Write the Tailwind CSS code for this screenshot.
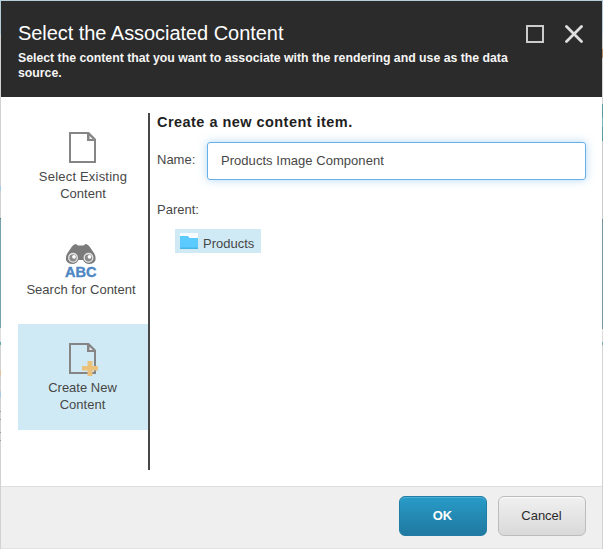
<!DOCTYPE html>
<html lang="en">
<head>
<meta charset="utf-8">
<title>Select the Associated Content</title>
<script src="https://cdn.jsdelivr.net/npm/@tailwindcss/browser@4"></script>
</head>
<body class="w-[603px] h-[549px] overflow-hidden bg-[#d2d2d2] font-['Liberation_Sans',Arial,sans-serif] text-[13px] text-[#474747]">
<div class="grid h-[549px] w-[603px] grid-cols-[1px_601px_1px]">
  <!-- page behind the dialog, left edge -->
  <div class="flex flex-col">
    <div class="h-[34px] bg-[#b5ccd9]"></div>
    <div class="h-[152px] bg-[#d2d2d2]"></div>
    <div class="h-[5px] bg-[#a4c9e2]"></div>
    <div class="h-[27px] bg-[#d2d2d2]"></div>
    <div class="h-px bg-[#55707c]"></div>
    <div class="h-[109px] bg-[#76a3ab]"></div>
    <div class="h-[14px] bg-[#dedede]"></div>
    <div class="h-[3px] bg-[#62acad]"></div>
    <div class="h-[25px] bg-[#d2d2d2]"></div>
    <div class="h-[6px] bg-[#dfc2a0]"></div>
    <div class="h-[15px] bg-[#d2d2d2]"></div>
    <div class="h-[7px] bg-[#afc9df]"></div>
    <div class="h-[13px] bg-[#d2d2d2]"></div>
    <div class="h-px bg-[#999]"></div>
    <div class="h-[7px] bg-[#d2d2d2]"></div>
    <div class="h-px bg-[#999]"></div>
    <div class="h-[12px] bg-[#d2d2d2]"></div>
    <div class="h-px bg-[#999]"></div>
    <div class="h-[7px] bg-[#d2d2d2]"></div>
    <div class="h-px bg-[#999]"></div>
  </div>
  <!-- dialog -->
  <div class="flex flex-col border-t border-t-[#b8ced9] border-b border-b-[#e4e4e4] bg-white">
    <header class="flex h-24 justify-between bg-[#2b2b2b] pl-[17px] pr-[19px] text-white">
      <div class="pt-[19px]">
        <h1 class="whitespace-nowrap text-[20px] leading-[26px] tracking-[-0.05px]">Select the Associated Content</h1>
        <p class="pt-[5px] whitespace-nowrap text-[12.3px] font-bold leading-[15px] tracking-[-0.01px] text-[#f5f5f5]">Select the content that you want to associate with the rendering and use as the data<br>source.</p>
      </div>
      <div class="flex gap-[21px] pt-6">
        <svg width="18" height="18" viewBox="0 0 18 18"><path d="M1 1H17V17H1Z" fill="none" stroke="#ccc" stroke-width="2"/></svg>
        <svg width="18" height="18" viewBox="0 0 18 18"><path d="M1.5 1.5L16.5 16.5M16.5 1.5L1.5 16.5" fill="none" stroke="#dedede" stroke-width="2.8" stroke-linecap="round"/></svg>
      </div>
    </header>
    <main class="flex h-[389px] pl-[17px] pr-4 pt-4">
      <nav class="flex h-[357px] w-[132px] flex-col border-r-2 border-[#474747] text-center leading-[17px]">
        <div class="flex h-[113px] flex-col items-center pt-[19px]">
          <svg class="-ml-[2px]" width="27" height="31" viewBox="0 0 27 31"><path d="M1 1H19.5L26 7.5V30H1Z" fill="none" stroke="#858585" stroke-width="2"/><path d="M18 1V9H26L19.5 1Z" fill="#858585"/><path d="M20.5 3.8V7H23.7Z" fill="#eee"/></svg>
          <div class="pt-[5px]"><span class="tracking-[0.2px]">Select Existing</span><br>Content</div>
        </div>
        <div class="flex h-[98px] flex-col items-center pt-[18px]">
          <svg class="-ml-[5px] overflow-visible" width="32" height="33" viewBox="0 0 32 33"><path d="M1 13C1.500 9 5 6 7 2.500Q8.500 0 11 0L13 1.500H18.500L20.500 0Q23 0 24.500 2.500C26.500 6 30 9 30.500 13V16Q29 20 24 20Q20 20 18 16H13.500Q11.500 20 7.500 20Q2.500 20 1 16Z" fill="#7b7b7b"/><circle cx="8" cy="13.800" r="4.300" fill="#8a8a8a" stroke="#e6e6e6" stroke-width="1.300"/><circle cx="23.500" cy="13.800" r="4.300" fill="#8a8a8a" stroke="#e6e6e6" stroke-width="1.300"/><circle cx="9" cy="12.800" r="1.900" fill="#fff"/><circle cx="24.500" cy="12.800" r="1.900" fill="#fff"/>
            <text x="0" y="33" textLength="31.500" lengthAdjust="spacingAndGlyphs" font-family="Liberation Sans, Arial, sans-serif" font-weight="700" font-size="15.500" fill="#4e86c4" stroke="#4e86c4" stroke-width=".4">ABC</text></svg>
          <div class="whitespace-nowrap -ml-[4px] pt-[4px]">Search for Content</div>
        </div>
        <div class="flex h-[106px] flex-col items-center bg-[#d0eaf5] pt-[19px]">
          <svg class="-ml-[2px] overflow-visible" width="27" height="31" viewBox="0 0 27 31"><path d="M1 1H19.5L26 7.5V30H1Z" fill="none" stroke="#858585" stroke-width="2"/><path d="M18 1V9H26L19.5 1Z" fill="#858585"/><path d="M20.5 3.8V7H23.7Z" fill="#eee"/><path d="M18.5 18H23.5V23H29V27.5H23.5V33H18.5V27.5H13V23H18.5Z" fill="#ebc27b"/></svg>
          <div class="-ml-[1px] pt-[5px]">Create New<br>Content</div>
        </div>
      </nav>
      <section class="flex flex-col pl-[7px]">
        <h2 class="h-[29px] whitespace-nowrap text-[14.5px] font-bold leading-[18px] tracking-[0.46px] text-[#1f1f1f]">Create a new content item.</h2>
        <div class="flex">
          <div class="w-[50px] pt-2.5 leading-[15px]">Name:</div>
          <div class="h-[38px] w-[379px] rounded-[3px] border border-[#66afe9] pl-[13px] leading-[36px] tracking-[0.04px] shadow-[0_0_8px_rgba(102,175,233,0.5)]">Products Image Component</div>
        </div>
        <div class="pt-[22px] leading-[15px]">Parent:</div>
        <div class="ml-[18px] mt-3 flex h-6 w-[86px] gap-[5px] bg-[#d0eaf5] pl-[5px] pt-1">
          <svg width="18" height="16" viewBox="0 0 18 16"><path d="M0 0H18V8H0Z" fill="#f8fcff"/><path d="M0 3H8L9.5 5H18V15.5H0Z" fill="#5bcaff"/><path d="M0 14.5H18V16H0Z" fill="#46b4e5"/></svg>
          <span class="pt-[3px] leading-[15px]">Products</span>
        </div>
      </section>
    </main>
    <footer class="flex h-[62px] justify-end gap-[11px] border-t border-[#dedede] bg-[#efefef] pr-4 pt-[9px] text-[13px]">
      <button class="h-10 w-[88px] rounded-[6px] border border-[#207da6] bg-linear-to-b from-[#289bc8] to-[#2079a1] pr-[1px] font-bold text-white shadow-[inset_0_1px_0_rgba(255,255,255,0.18)]">OK</button>
      <button class="h-10 w-[88px] rounded-[6px] border border-[#bcbcbc] bg-linear-to-b from-[#f0f0f0] to-[#d9d9d9] pr-[1px] text-[#2b2b2b] shadow-[inset_0_1px_0_rgba(255,255,255,0.7)]">Cancel</button>
    </footer>
  </div>
  <!-- page behind the dialog, right edge -->
  <div class="flex flex-col">
    <div class="h-[34px] bg-[#b5c9dc]"></div>
    <div class="h-[15px] bg-[#c8cdd0]"></div>
    <div class="h-[9px] bg-[#b8916f]"></div>
    <div class="h-[46px] bg-[#d2d2d2]"></div>
    <div class="h-[14px] bg-[#5b9ca2]"></div>
    <div class="h-[9px] bg-[#78b6be]"></div>
    <div class="h-[14px] bg-[#5b9ca2]"></div>
    <div class="h-[78px] bg-[#cbcbcb]"></div>
    <div class="h-[110px] bg-[#76979f]"></div>
    <div class="h-[13px] bg-[#dedede]"></div>
    <div class="h-[3px] bg-[#75aaae]"></div>
  </div>
</div>
</body>
</html>
